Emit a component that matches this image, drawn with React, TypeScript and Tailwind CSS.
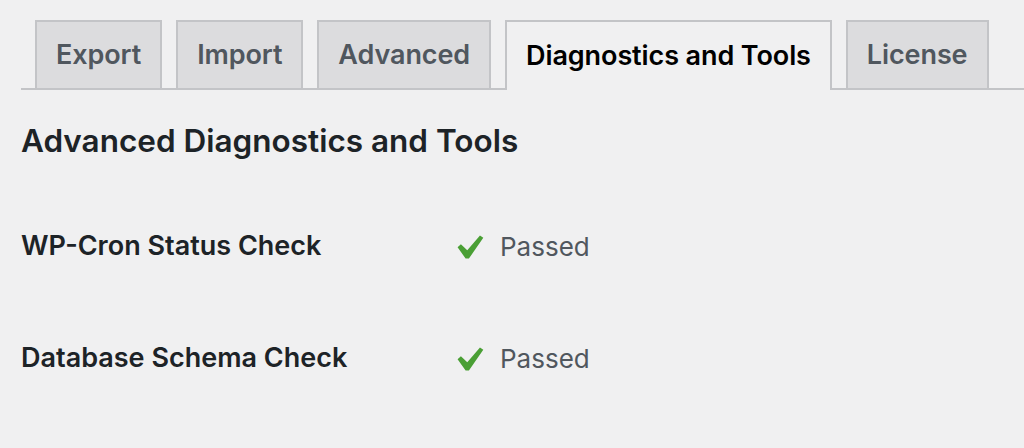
const tabs = ["Export", "Import", "Advanced", "Diagnostics and Tools", "License"];
const ACTIVE = "Diagnostics and Tools";

const checks = ["WP-Cron Status Check", "Database Schema Check"];

function CheckIcon() {
  return (
    <svg viewBox="5.6 4.7 10.8 9.7" className="w-[27px] h-[24px] text-[#4a9f35]" fill="currentColor">
      <path d="M14.83 4.89l1.34.94-5.81 8.38H9.02L5.78 9.67l1.34-1.25 2.57 2.4z" />
    </svg>
  );
}

export default function App() {
  return (
    <div
      className="min-h-screen w-full bg-[#f0f0f1] text-[#1d2327]"
      style={{ fontFamily: "Inter, 'Liberation Sans', sans-serif" }}
    >
      <div className="pt-5 pl-[21px]">
        <nav className="flex items-end border-b-2 border-[#c3c4c7] pl-[14px]">
          {tabs.map((tab) => {
            const active = tab === ACTIVE;
            return (
              <div
                key={tab}
                className={
                  active
                    ? "-mb-[2px] mr-[14px] h-[70px] shrink-0 whitespace-nowrap flex items-center px-[19px] border-2 border-b-0 border-[#c3c4c7] bg-[#f0f0f1] text-[27px] tracking-[-0.1px] font-semibold text-black"
                    : "mr-[14px] h-[68px] shrink-0 whitespace-nowrap flex items-center px-[19px] border-2 border-b-0 border-[#c3c4c7] bg-[#dcdcde] text-[27px] tracking-[-0.1px] font-semibold text-[#50575e]"
                }
              >
                {tab}
              </div>
            );
          })}
        </nav>
        <h2 className="mt-[35px] text-[31.5px] font-semibold leading-none">Advanced Diagnostics and Tools</h2>
        <div className="mt-[74px] flex flex-col gap-[80px]">
          {checks.map((label) => (
            <div key={label} className="flex items-center h-[32px]">
              <div className="w-[436px] text-[27px] font-semibold">{label}</div>
              <div className="flex items-center gap-[16px] text-[26px] text-[#50575e]">
                <CheckIcon />
                <span>Passed</span>
              </div>
            </div>
          ))}
        </div>
      </div>
    </div>
  );
}
